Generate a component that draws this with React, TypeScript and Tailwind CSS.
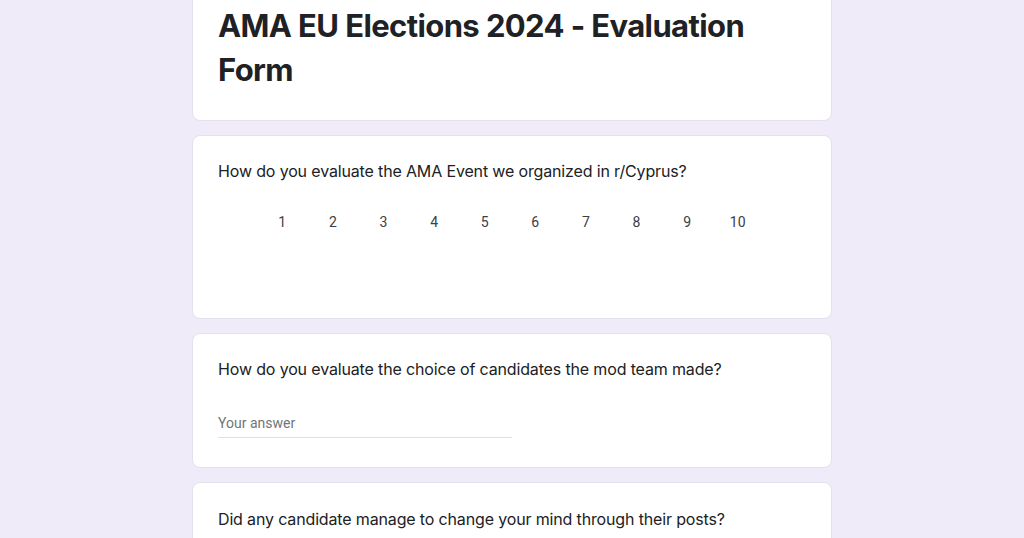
import React from "react";

const scale = ["1", "2", "3", "4", "5", "6", "7", "8", "9", "10"];

const Card = ({ children, className = "" }: { children: React.ReactNode; className?: string }) => (
  <div className={`w-[640px] rounded-lg border border-[#e4e0ee] bg-white px-[25px] ${className}`}>{children}</div>
);

const App = () => {
  return (
    <main className="h-[538px] w-full overflow-hidden bg-[#f0ebf8] font-['Roboto',sans-serif] text-[#202124]">
      <div className="mx-auto flex w-[640px] flex-col gap-[14px]">
        {/* title card, top runs off the page */}
        <Card className="-mt-[24px] rounded-t-none pt-[27px] pb-[28px]">
          <h1 className="w-[560px] font-['Inter',sans-serif] text-[31px] leading-[44px] font-bold tracking-[-0.6px] text-[#202124]">
            AMA EU Elections 2024 - Evaluation Form
          </h1>
        </Card>

        <Card className="h-[184px] pt-[23px]">
          <p className="font-['Inter',sans-serif] text-[16px] leading-[24px] tracking-[-0.15px]">
            How do you evaluate the AMA Event we organized in r/Cyprus?
          </p>
          <div className="mt-[29px] ml-[39px] grid w-[506px] grid-cols-10 text-[14px] leading-[20px] text-[#3c4043]">
            {scale.map((n) => (
              <span key={n} className="text-center">
                {n}
              </span>
            ))}
          </div>
        </Card>

        <Card className="h-[135px] pt-[23px]">
          <p className="font-['Inter',sans-serif] text-[16px] leading-[24px] tracking-[-0.15px]">
            How do you evaluate the choice of candidates the mod team made?
          </p>
          <div className="mt-[32px] w-1/2 border-b border-[#e0e0e0] pb-[4px] text-[14px] leading-[20px] text-[#70757a]">
            Your answer
          </div>
        </Card>

        <Card className="h-[120px] pt-[24px]">
          <p className="font-['Inter',sans-serif] text-[16px] leading-[24px] tracking-[-0.15px]">
            Did any candidate manage to change your mind through their posts?
          </p>
        </Card>
      </div>
    </main>
  );
};

export default App;
